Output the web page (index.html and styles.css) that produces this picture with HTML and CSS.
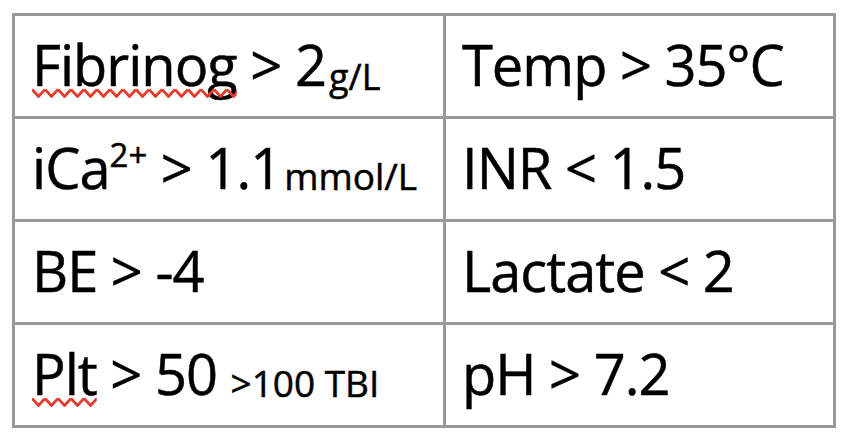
FILE: index.html
```html
<!DOCTYPE html>
<html>
<head>
<meta charset="utf-8">
<link rel="stylesheet" href="styles.css">
</head>
<body>
<svg class="defs" width="0" height="0" aria-hidden="true">
  <defs>
    <pattern id="zig" width="13" height="10" patternUnits="userSpaceOnUse">
      <polyline points="0,1.5 6.5,8.5 13,1.5" fill="none" stroke="#e53a2c" stroke-width="2.8"/>
    </pattern>
  </defs>
</svg>
<div class="grid">
  <div class="cell"><span class="spell">Fibrinog<svg class="squiggle"><rect width="100%" height="10" fill="url(#zig)"/></svg></span> &gt; 2<span class="sub sub-g">g/L</span></div>
  <div class="cell right">Temp &gt; 35°C</div>
  <div class="cell">iCa<span class="sup">2+</span> &gt; 1.1<span class="sub sub-m">mmol/L</span></div>
  <div class="cell right">INR &lt; 1.5</div>
  <div class="cell">BE &gt; -4</div>
  <div class="cell right">Lactate &lt; 2</div>
  <div class="cell"><span class="spell">Plt<svg class="squiggle"><rect width="100%" height="10" fill="url(#zig)"/></svg></span> &gt; 50 <span class="small">&gt;100 TBI</span></div>
  <div class="cell right">pH &gt; 7.2</div>
</div>
</body>
</html>
```

FILE: styles.css
```css
html, body {
  margin: 0;
  padding: 0;
  background: #ffffff;
}
body {
  padding: 13px 0 0 12px;
}
.defs {
  position: absolute;
  width: 0;
  height: 0;
}
.grid {
  display: grid;
  grid-template-columns: 428px 387px;
  grid-template-rows: 100px 100px 100px 100px;
  gap: 3px;
  padding: 3px;
  background: #9a9a9a;
  width: max-content;
}
.cell {
  background: #ffffff;
  font-family: "Open Sans", sans-serif;
  font-size: 56px;
  font-weight: 500;
  letter-spacing: -1px;
  line-height: 1;
  color: #000;
  -webkit-text-stroke: 0.5px #000;
  padding: 20px 0 0 17px;
  white-space: nowrap;
}
.cell.right {
  padding-left: 16px;
}
.spell {
  position: relative;
}
.squiggle {
  position: absolute;
  left: 0;
  right: 0;
  bottom: 4px;
  width: 100%;
  height: 10px;
}
.sub {
  position: relative;
  line-height: 0;
  letter-spacing: 0;
}
.sub-g {
  font-size: 36px;
  top: 4px;
  margin-left: 3px;
}
.sub-m {
  font-size: 37px;
  top: 1px;
  margin-left: 3px;
}
.sup {
  font-size: 33px;
  line-height: 0;
  letter-spacing: 0;
  position: relative;
  top: -22px;
}
.small {
  font-size: 37px;
  letter-spacing: 0;
  position: relative;
  top: 2px;
}
```
